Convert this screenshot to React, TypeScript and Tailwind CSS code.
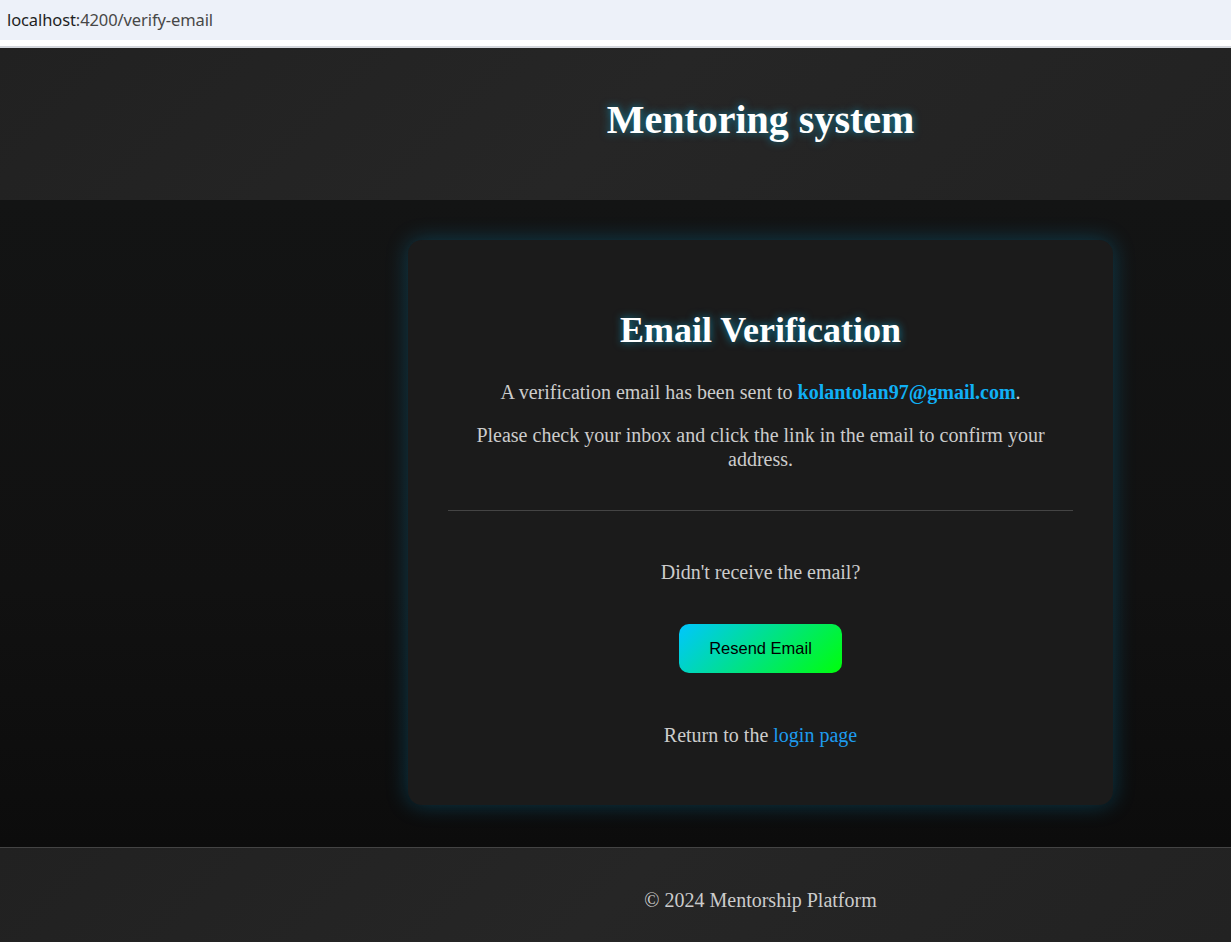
import React from 'react';

const serif = "font-['Liberation_Serif','Times_New_Roman',serif]";

const App: React.FC = () => {
  return (
    <div className={`min-h-screen flex flex-col ${serif}`}>
      {/* Browser address bar */}
      <div className="h-[40px] bg-[#edf1f9] flex items-center px-[7px]">
        <span className="font-['Noto_Sans',sans-serif] text-[16.5px] text-[#1f1f1f] tracking-[-0.1px]">
          localhost<span className="text-[#474747]">:4200/verify-email</span>
        </span>
      </div>
      <div className="h-[6px] bg-white" />
      <div className="h-[2px] bg-[#d3d6dc]" />

      {/* Header */}
      <header className="h-[152px] bg-[linear-gradient(135deg,#212121,#262626,#222222)] flex">
        <div className="w-[290px] shrink-0" />
        <div className="flex-1 flex items-center justify-center pb-[8px]">
          <h1 className="text-[40px] font-bold text-white leading-none [text-shadow:0_0_8px_rgba(0,200,255,0.55)]">
            Mentoring system
          </h1>
        </div>
      </header>

      {/* Main */}
      <main className="h-[647px] bg-[linear-gradient(180deg,#131414,#111111_60%,#0c0c0c)] flex">
        <div className="w-[290px] shrink-0" />
        <div className="flex-1 flex justify-center pt-[40px]">
          <div className="w-[705px] h-[565px] bg-[#1b1b1b] rounded-[14px] shadow-[0_0_22px_rgba(0,170,230,0.28)] px-[40px] pt-[70px] flex flex-col items-center text-center">
            <h2 className="text-[36px] font-bold text-white leading-[40px] [text-shadow:0_0_8px_rgba(0,200,255,0.6)]">
              Email Verification
            </h2>
            <p className="mt-[30px] text-[20px] leading-[24px] text-[#cccccc]">
              A verification email has been sent to{' '}
              <strong className="text-[#10b0f5]">kolantolan97@gmail.com</strong>.
            </p>
            <p className="mt-[19px] text-[20px] leading-[24px] text-[#cccccc]">
              Please check your inbox and click the link in the email to confirm your address.
            </p>
            <hr className="w-full mt-[39px] border-0 h-px bg-[#444444]" />
            <p className="mt-[49px] text-[20px] leading-[24px] text-[#cccccc]">Didn't receive the email?</p>
            <button className="mt-[40px] w-[163px] h-[49px] rounded-[10px] bg-[linear-gradient(135deg,#00c6ff,#00ff0a)] font-['Liberation_Sans',Arial,sans-serif] text-[16.5px] text-black">
              Resend Email
            </button>
            <p className="mt-[50px] text-[20px] leading-[24px] text-[#cccccc]">
              Return to the <a href="#" className="text-[#1e9bef]">login page</a>
            </p>
          </div>
        </div>
      </main>

      {/* Footer */}
      <footer className="h-[95px] border-t border-[#444444] bg-[linear-gradient(135deg,#212121,#262626,#222222)] flex">
        <div className="w-[290px] shrink-0" />
        <div className="flex-1 flex items-center justify-center pt-[10px]">
          <p className="text-[20px] text-[#cccccc]">© 2024 Mentorship Platform</p>
        </div>
      </footer>
    </div>
  );
};

export default App;
